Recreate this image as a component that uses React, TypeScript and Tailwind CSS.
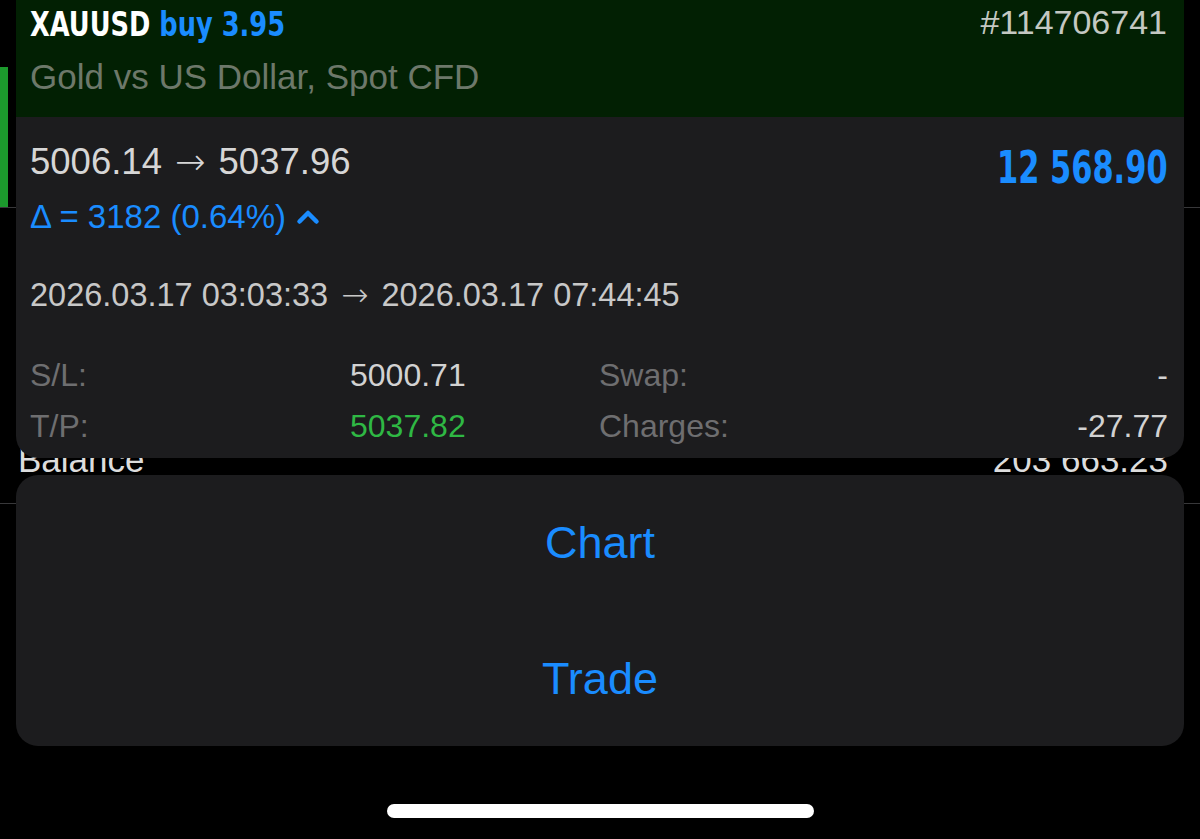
function ChevronUp() {
  return (
    <svg width="24" height="16" viewBox="0 0 24 16" className="ml-[10px] inline-block">
      <polyline
        points="3.5,12.5 12,4 20.5,12.5"
        fill="none"
        stroke="#1a8cff"
        strokeWidth="4.5"
        strokeLinecap="round"
        strokeLinejoin="round"
      />
    </svg>
  )
}

function Arrow() {
  return <span className="mx-[13px] font-['DejaVu_Sans',sans-serif] font-light">→</span>
}

function Background() {
  return (
    <div className="flex flex-col">
      <div className="h-[67px]" />
      <div className="flex h-[140px]">
        <div className="w-[8px] bg-[#1c9a2d]" />
      </div>
      <div className="h-px bg-[#38383a]" />
      <div className="h-[224px]" />
      <div className="flex h-[56px] items-center justify-between pl-[18px] pr-[32px] text-[35px] leading-[56px] text-[#dcdcdc]">
        <span>Balance</span>
        <span>203 663.23</span>
      </div>
      <div className="h-[15px]" />
      <div className="h-px bg-[#38383a]" />
    </div>
  )
}

function DetailRow({ label, value, valueClass, label2, value2 }: {
  label: string
  value: string
  valueClass: string
  label2: string
  value2: string
}) {
  return (
    <div className="grid h-[51px] grid-cols-[320px_249px_1fr_auto] items-center text-[32px] leading-[51px]">
      <span className="text-[#6e6e70]">{label}</span>
      <span className={valueClass}>{value}</span>
      <span className="text-[#6e6e70]">{label2}</span>
      <span className="text-right text-[#d2d2d2]">{value2}</span>
    </div>
  )
}

function PositionCard() {
  return (
    <div className="mx-4 flex h-[458px] flex-col overflow-hidden rounded-b-[22px] bg-[#1c1c1e]">
      <div className="flex h-[117px] flex-col bg-[#022003] px-[14px] pr-[17px]">
        <div className="flex h-[48px] items-center justify-between">
          <span className="inline-block origin-left scale-x-[0.84] whitespace-nowrap font-['DejaVu_Sans_Condensed','DejaVu_Sans',sans-serif] text-[34px] font-bold text-white">
            XAUUSD <span className="text-[#1a8cff]">buy 3.95</span>
          </span>
          <span className="-mt-[4px] text-[34px] text-[#c4c8c2]">#114706741</span>
        </div>
        <div className="flex h-[58px] items-center text-[35px] text-[#6d786a]">
          Gold vs US Dollar, Spot CFD
        </div>
      </div>

      <div className="flex flex-col px-[14px] pr-[16px] pt-[23px]">
        <div className="flex h-[44px] items-start justify-between">
          <span className="whitespace-nowrap text-[36.5px] leading-[44px] text-[#d6d6d6]">
            5006.14<Arrow />5037.96
          </span>
          <span className="mt-[6px] inline-block origin-right scale-x-[0.77] whitespace-nowrap font-['DejaVu_Sans_Condensed','DejaVu_Sans',sans-serif] text-[44px] font-bold leading-[44px] text-[#1a8cff]">
            12 568.90
          </span>
        </div>
        <div className="mt-[11px] flex h-[44px] items-center text-[33px] text-[#1a8cff]">
          <span>Δ = 3182 (0.64%)</span>
          <ChevronUp />
        </div>
        <div className="mt-[34px] flex h-[44px] items-center whitespace-nowrap text-[32.5px] text-[#c8c8c8]">
          2026.03.17 03:03:33<Arrow />2026.03.17 07:44:45
        </div>
        <div className="mt-[33px] flex flex-col">
          <DetailRow label="S/L:" value="5000.71" valueClass="text-[#d2d2d2]" label2="Swap:" value2="-" />
          <DetailRow label="T/P:" value="5037.82" valueClass="text-[#2fb844]" label2="Charges:" value2="-27.77" />
        </div>
      </div>
    </div>
  )
}

function ActionSheet() {
  return (
    <div className="mx-4 mt-[17px] flex h-[271px] flex-col rounded-[22px] bg-[#1c1c1e] text-[45px] text-[#1a8cff]">
      <button className="flex flex-1 items-center justify-center">Chart</button>
      <button className="flex flex-1 items-center justify-center">Trade</button>
    </div>
  )
}

export default function App() {
  return (
    <div className="relative h-[839px] w-[1200px] overflow-hidden bg-black font-['Liberation_Sans',Arial,sans-serif]">
      <Background />
      <div className="absolute inset-0 flex flex-col">
        <PositionCard />
        <ActionSheet />
        <div className="mt-[58px] flex justify-center">
          <div className="h-[14px] w-[427px] rounded-full bg-white" />
        </div>
      </div>
    </div>
  )
}
